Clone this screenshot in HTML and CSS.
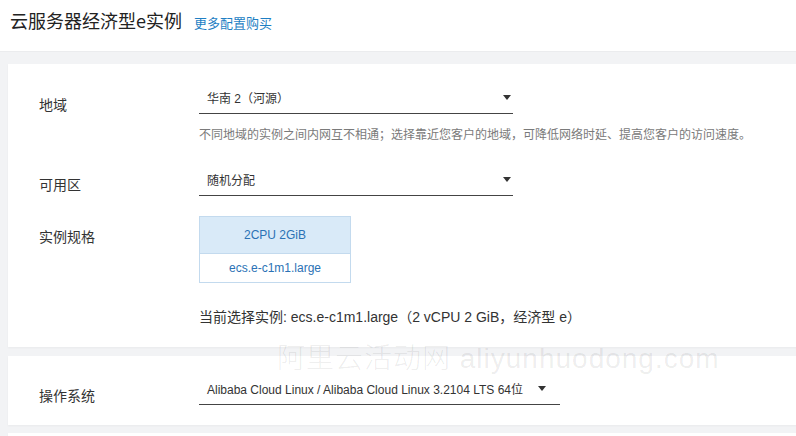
FILE: index.html
```html
<!DOCTYPE html>
<html lang="zh-CN">
<head>
<meta charset="utf-8">
<title>云服务器经济型e实例</title>
<link rel="stylesheet" href="styles.css">
</head>
<body>
<header class="top">
  <h1 class="title">云服务器经济型e实例</h1>
  <a class="more" href="#">更多配置购买</a>
</header>
<main class="main">
  <section class="panel panel-first">
    <div class="row row-region">
      <div class="label">地域</div>
      <div class="field">
        <div class="select w-314"><span class="value">华南 2（河源）</span><span class="caret"></span></div>
        <p class="help">不同地域的实例之间内网互不相通；选择靠近您客户的地域，可降低网络时延、提高您客户的访问速度。</p>
      </div>
    </div>
    <div class="row row-zone">
      <div class="label">可用区</div>
      <div class="field">
        <div class="select w-314"><span class="value">随机分配</span><span class="caret"></span></div>
      </div>
    </div>
    <div class="row row-spec">
      <div class="label">实例规格</div>
      <div class="field">
        <div class="spec">
          <div class="spec-head">2CPU 2GiB</div>
          <div class="spec-body">ecs.e-c1m1.large</div>
        </div>
        <p class="current">当前选择实例: ecs.e-c1m1.large（2 vCPU 2 GiB，经济型 e）</p>
      </div>
    </div>
  </section>
  <section class="panel panel-os">
    <div class="row row-os">
      <div class="label">操作系统</div>
      <div class="field">
        <div class="select w-361 select-os"><span class="value">Alibaba Cloud Linux / Alibaba Cloud Linux 3.2104 LTS 64位</span><span class="caret"></span></div>
      </div>
    </div>
  </section>
  <section class="panel panel-next"></section>
  <div class="watermark">阿里云活动网 aliyunhuodong.com</div>
</main>
</body>
</html>
```
FILE: styles.css
```css
* { box-sizing: border-box; }
html, body { margin: 0; padding: 0; }
body {
  width: 796px;
  height: 436px;
  overflow: hidden;
  background: #fff;
  font-family: "Liberation Sans", "Noto Sans CJK SC", sans-serif;
  color: #333;
}
.top {
  height: 51px;
  display: flex;
  align-items: baseline;
  padding: 7px 0 0 10px;
  background: #fff;
}
.title {
  margin: 0;
  font-size: 18px;
  font-weight: normal;
  line-height: 26px;
  color: #222;
  font-family: "Noto Sans CJK SC", sans-serif;
}
.more {
  margin-left: 12px;
  font-size: 13px;
  color: #1f7fc4;
  text-decoration: none;
  font-family: "Noto Sans CJK SC", sans-serif;
}
.main {
  position: relative;
  background: #f2f3f5;
  padding: 12px 0 0 8px;
  height: 385px;
  border-top: 1px solid #ebecee;
}
.panel {
  background: #fff;
  margin-right: -20px;
  box-shadow: 0 1px 2px rgba(0,0,0,0.04);
}
.panel-first { padding: 19px 0 20px 31px; }
.panel-os { margin-top: 9px; padding: 18px 0 20px 31px; }
.panel-next { margin-top: 8px; height: 20px; }
.row {
  display: grid;
  grid-template-columns: 160px auto;
  align-items: start;
}
.label {
  font-size: 14px;
  line-height: 20px;
  font-family: "Noto Sans CJK SC", sans-serif;
  color: #333;
}
.row-region .label { padding-top: 11px; }
.row-zone { margin-top: 22px; }
.row-zone .label { padding-top: 9px; }
.row-spec { margin-top: 20px; }
.row-spec .label { padding-top: 10px; }
.row-os .label { padding-top: 11px; }
.select {
  height: 31px;
  display: flex;
  align-items: center;
  justify-content: space-between;
  padding: 0 2px 2px 8px;
  border-bottom: 1px solid #444;
  font-size: 12px;
  color: #333;
}
.w-314 { width: 314px; }
.w-361 { width: 361px; }
.select-os { padding-right: 14px; }
.value { white-space: nowrap; }
.caret {
  width: 0;
  height: 0;
  border-left: 4px solid transparent;
  border-right: 4px solid transparent;
  border-top: 5px solid #333;
}
.help {
  margin: 11px 0 0 0;
  font-size: 12px;
  line-height: 18px;
  color: #7a7a7a;
  font-family: "Noto Sans CJK SC", sans-serif;
  white-space: nowrap;
}
.spec {
  width: 152px;
  border: 1px solid #c3daee;
  font-size: 12px;
  color: #2b72b5;
  text-align: center;
}
.spec-head {
  height: 37px;
  line-height: 37px;
  background: #d9eaf8;
  border-bottom: 1px solid #c3daee;
}
.spec-body {
  height: 28px;
  line-height: 28px;
  background: #fff;
}
.current {
  margin: 24px 0 0 0;
  font-size: 14px;
  line-height: 20px;
  color: #333;
  white-space: nowrap;
}
.watermark {
  position: absolute;
  left: 277px;
  top: 290px;
  font-size: 28px;
  line-height: 34px;
  font-weight: 300;
  letter-spacing: 1px;
  color: rgba(0,0,0,0.08);
  white-space: nowrap;
  font-family: "Liberation Sans", "Noto Sans CJK SC", sans-serif;
  pointer-events: none;
}
```
